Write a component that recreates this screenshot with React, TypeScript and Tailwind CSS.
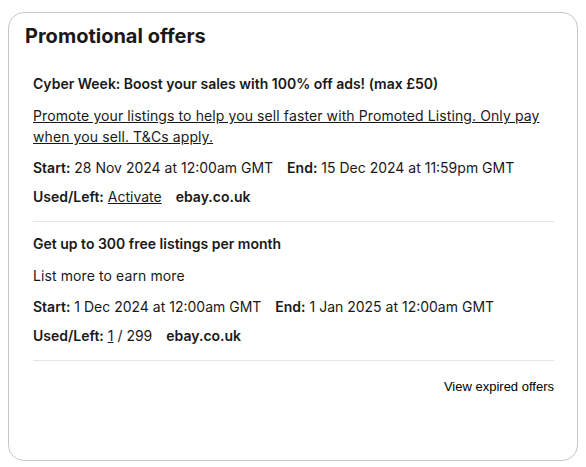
import React from 'react';

interface Offer {
  title: string;
  body: string;
  isLink: boolean;
  start: string;
  end: string;
  used: React.ReactNode;
  site: string;
}

const offers: Offer[] = [
  {
    title: 'Cyber Week: Boost your sales with 100% off ads! (max £50)',
    body: 'Promote your listings to help you sell faster with Promoted Listing. Only pay when you sell. T&Cs apply.',
    isLink: true,
    start: '28 Nov 2024 at 12:00am GMT',
    end: '15 Dec 2024 at 11:59pm GMT',
    used: <a href="#" className="underline">Activate</a>,
    site: 'ebay.co.uk',
  },
  {
    title: 'Get up to 300 free listings per month',
    body: 'List more to earn more',
    isLink: false,
    start: '1 Dec 2024 at 12:00am GMT',
    end: '1 Jan 2025 at 12:00am GMT',
    used: (
      <>
        <a href="#" className="underline">1</a> / 299
      </>
    ),
    site: 'ebay.co.uk',
  },
];

function OfferRow({ offer }: { offer: Offer }) {
  return (
    <div className="border-b border-[#e5e5e5] pt-[11px] pb-[14px] text-sm leading-[21px]">
      <h3 className="font-semibold">{offer.title}</h3>
      <p className="mt-[11px] tracking-[0.1px]">
        {offer.isLink ? (
          <a href="#" className="underline">{offer.body}</a>
        ) : (
          offer.body
        )}
      </p>
      <div className="mt-[10px] flex gap-[14px] whitespace-nowrap">
        <span>
          <b className="font-semibold">Start:</b> {offer.start}
        </span>
        <span>
          <b className="font-semibold">End:</b> {offer.end}
        </span>
      </div>
      <div className="mt-[8px] flex gap-[14px]">
        <span>
          <b className="font-semibold">Used/Left:</b> {offer.used}
        </span>
        <b className="font-semibold">{offer.site}</b>
      </div>
    </div>
  );
}

export default function App() {
  return (
    <div className="bg-white min-h-screen pt-3 pl-2 pr-2 pb-[6px] text-[#191919] font-['Inter',sans-serif]">
      <div className="h-[449px] w-[570px] rounded-2xl border border-[#c7c7c7] px-4 pt-[9px]">
        <h2 className="text-xl font-bold leading-7">Promotional offers</h2>
        <div className="mt-3 ml-2 mr-[7px]">
          {offers.map((o) => (
            <OfferRow key={o.title} offer={o} />
          ))}
          <div className="flex justify-end pt-[18px]">
            <a href="#" className="text-[13px] leading-[15px] font-['Liberation_Sans',Arial,sans-serif] text-black">
              View expired offers
            </a>
          </div>
        </div>
      </div>
    </div>
  );
}
